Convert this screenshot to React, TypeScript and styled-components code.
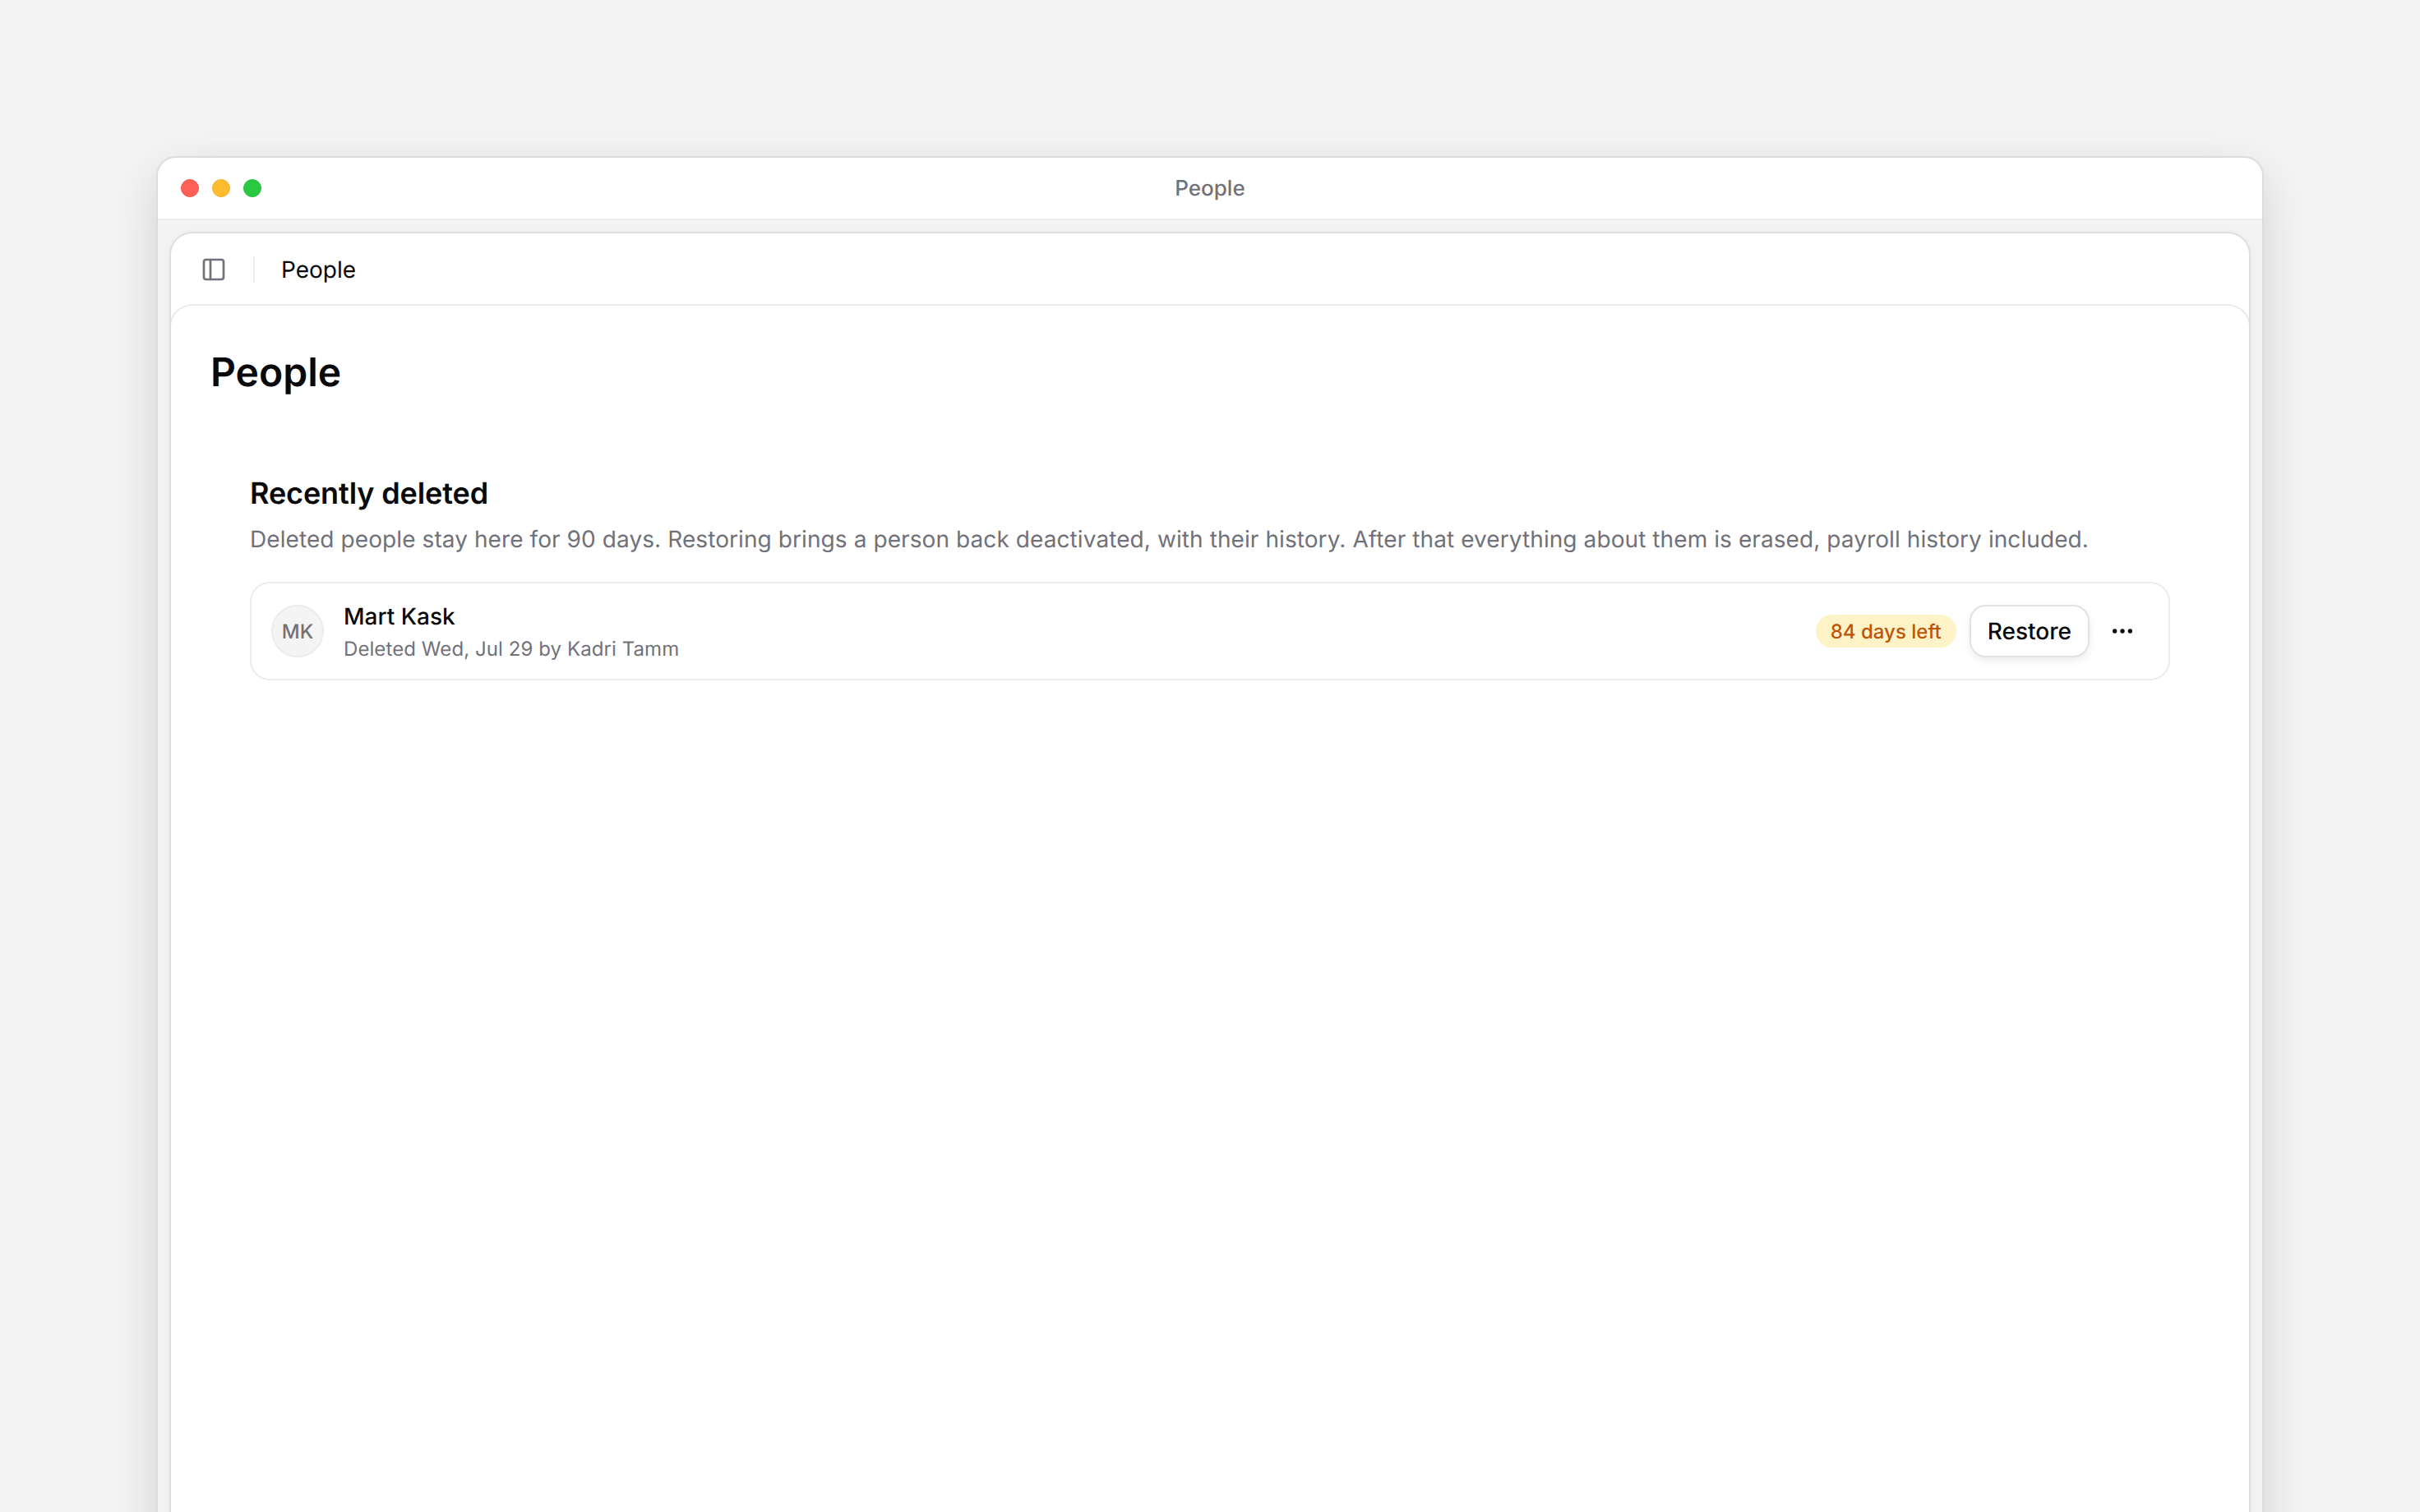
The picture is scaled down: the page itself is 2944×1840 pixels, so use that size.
import React from "react";
import styled, { createGlobalStyle } from "styled-components";
import { PanelLeft, Ellipsis } from "lucide-react";

const Global = createGlobalStyle`
  html, body { margin: 0; height: 100%; background: #f4f4f4; overflow: hidden; }
  * { box-sizing: border-box; }
  body { font-family: Inter, "Noto Sans", sans-serif; color: #09090b; text-rendering: geometricPrecision; }
`;

const Page = styled.div`
  height: 100vh;
  overflow: hidden;
  padding: 190px 190px 0;
  background: #f4f4f4;
`;

const Win = styled.div`
  height: 1700px;
  display: flex;
  flex-direction: column;
  border: 2px solid #dcdcdc;
  border-radius: 24px;
  background: #f3f3f3;
  box-shadow: 0 20px 60px rgba(0, 0, 0, 0.14);
  overflow: hidden;
`;

const TitleBar = styled.header`
  position: relative;
  flex: none;
  height: 76px;
  display: flex;
  align-items: center;
  justify-content: center;
  background: #fff;
  border-bottom: 2px solid #ececec;
`;

const Lights = styled.div`
  position: absolute;
  left: 28px;
  top: 26px;
  display: flex;
  gap: 16px;
`;

const Light = styled.span<{ $c: string; $b: string }>`
  width: 22px;
  height: 22px;
  border-radius: 50%;
  background: ${(p) => p.$c};
  border: 1px solid ${(p) => p.$b};
`;

const WinTitle = styled.div`
  padding-top: 1px;
  font-size: 26px;
  line-height: 36px;
  font-weight: 500;
  color: #71717a;
`;

const Panel = styled.div`
  flex: 1;
  margin: 14px 14px 0;
  display: flex;
  flex-direction: column;
  background: #fff;
  border: 2px solid #dedede;
  border-bottom: 0;
  border-radius: 28px 28px 0 0;
  box-shadow: 0 2px 12px rgba(0, 0, 0, 0.04);
  overflow: hidden;
`;

const TopBar = styled.div`
  flex: none;
  height: 86px;
  display: flex;
  align-items: center;
  padding: 2px 0 0 36px;
`;

const IconBtn = styled.span`
  display: flex;
  color: #71717a;
`;

const Sep = styled.span`
  width: 2px;
  height: 32px;
  margin: 0 32px;
  background: #ececec;
`;

const Crumb = styled.div`
  font-size: 28px;
  line-height: 36px;
  color: #09090b;
`;

const Main = styled.main`
  flex: 1;
  margin: 0 -2px;
  padding: 53px 48px 0;
  background: #fff;
  border: 2px solid #ebebeb;
  border-bottom: 0;
  border-radius: 28px 28px 0 0;
`;

const H1 = styled.h1`
  margin: 0;
  font-size: 48px;
  line-height: 56px;
  font-weight: 600;
`;

const Section = styled.section`
  padding: 97px 48px 0;
`;

const H2 = styled.h2`
  margin: 0;
  font-size: 36px;
  line-height: 44px;
  font-weight: 600;
  letter-spacing: -0.12px;
`;

const Desc = styled.p`
  margin: 12px 0 0;
  font-size: 28px;
  line-height: 44px;
  letter-spacing: 0.085px;
  color: #71717a;
`;

const Card = styled.div`
  margin-top: 30px;
  height: 120px;
  display: flex;
  align-items: center;
  gap: 24px;
  padding: 0 24px;
  border: 2px solid #ececec;
  border-radius: 24px;
`;

const Avatar = styled.div`
  flex: none;
  width: 64px;
  height: 64px;
  display: flex;
  align-items: center;
  justify-content: center;
  border-radius: 50%;
  background: #f4f4f5;
  border: 2px solid #ececec;
  font-size: 24px;
  font-weight: 500;
  color: #71717a;
`;

const Info = styled.div`
  flex: 1;
  min-width: 0;
  padding-top: 2px;
`;

const Name = styled.div`
  font-size: 28px;
  line-height: 36px;
  font-weight: 500;
`;

const Sub = styled.div`
  margin-top: 6px;
  font-size: 24px;
  line-height: 32px;
  letter-spacing: 0.08px;
  color: #71717a;
`;

const Badge = styled.span`
  flex: none;
  height: 40px;
  display: flex;
  align-items: center;
  padding: 0 18px;
  border-radius: 20px;
  background: #fef3c7;
  color: #bd5508;
  font-size: 24px;
  font-weight: 500;
`;

const Actions = styled.div`
  flex: none;
  display: flex;
  align-items: center;
  gap: 16px;
`;

const Restore = styled.button`
  height: 64px;
  padding: 0 20px;
  background: #fff;
  border: 2px solid #e2e2e2;
  border-radius: 20px;
  box-shadow: 0 4px 10px rgba(0, 0, 0, 0.08);
  font: 500 28px/36px Inter, sans-serif;
  color: #09090b;
  text-rendering: geometricPrecision;
`;

const More = styled.button`
  width: 64px;
  height: 64px;
  margin-left: -8px;
  display: flex;
  align-items: center;
  justify-content: center;
  padding: 0;
  background: transparent;
  border: 0;
  color: #09090b;
`;

export default function App() {
  return (
    <>
      <Global />
      <Page>
        <Win>
          <TitleBar>
            <Lights>
              <Light $c="#ff5f57" $b="#f2554d" />
              <Light $c="#febc2e" $b="#f0b02a" />
              <Light $c="#28c840" $b="#26c13c" />
            </Lights>
            <WinTitle>People</WinTitle>
          </TitleBar>
          <Panel>
            <TopBar>
              <IconBtn>
                <PanelLeft size={32} strokeWidth={2} />
              </IconBtn>
              <Sep />
              <Crumb>People</Crumb>
            </TopBar>
            <Main>
              <H1>People</H1>
              <Section>
                <H2>Recently deleted</H2>
                <Desc>
                  Deleted people stay here for 90 days. Restoring brings a person back deactivated, with their history.
                  After that everything about them is erased, payroll history included.
                </Desc>
                <Card>
                  <Avatar>MK</Avatar>
                  <Info>
                    <Name>Mart Kask</Name>
                    <Sub>Deleted Wed, Jul 29 by Kadri Tamm</Sub>
                  </Info>
                  <Actions>
                    <Badge>84 days left</Badge>
                    <Restore>Restore</Restore>
                    <More aria-label="More">
                      <Ellipsis size={32} />
                    </More>
                  </Actions>
                </Card>
              </Section>
            </Main>
          </Panel>
        </Win>
      </Page>
    </>
  );
}
